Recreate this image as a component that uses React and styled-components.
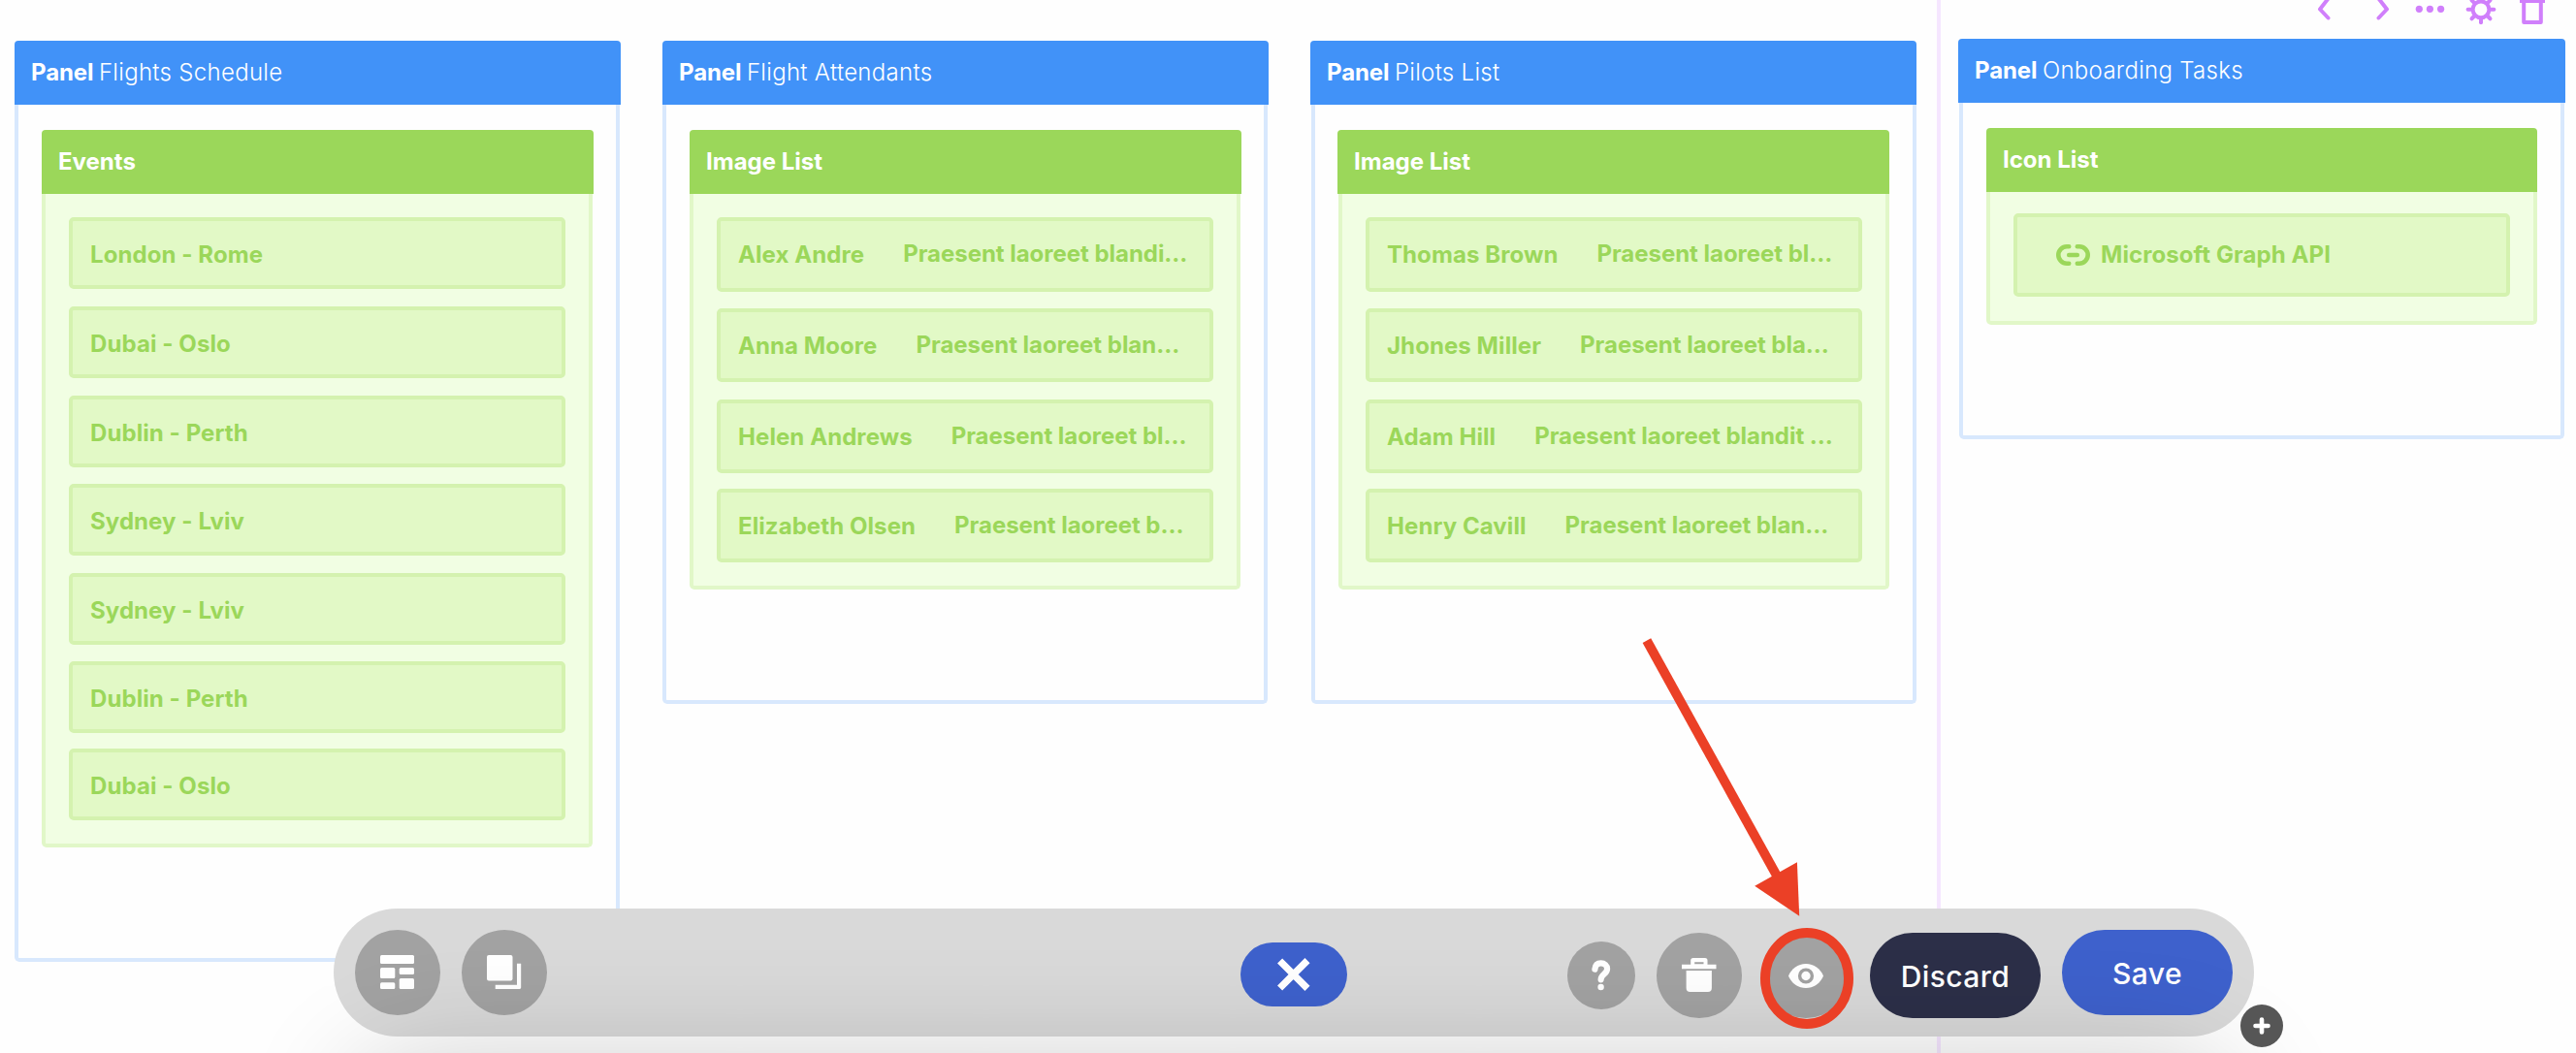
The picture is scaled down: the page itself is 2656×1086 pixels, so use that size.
import React from 'react'
import styled, { createGlobalStyle } from 'styled-components';


const GlobalStyle = createGlobalStyle`
  * {
    box-sizing: border-box;
  }

  body {
    margin: 0;
    background: #fefefe;
    font-family: Inter, "Liberation Sans", sans-serif;
    overflow: hidden;
  }
`

const Events = [
  { name: "London - Rome", gap: 18 },
  { name: "Dubai - Oslo", gap: 18 },
  { name: "Dublin - Perth", gap: 17 },
  { name: "Sydney - Lviv", gap: 18 },
  { name: "Sydney - Lviv", gap: 17 },
  { name: "Dublin - Perth", gap: 16 },
  { name: "Dubai - Oslo", gap: 0 },
]

const Attendants = [
  { name: "Alex Andre", text: "Praesent laoreet blandi…", gap: 17, height: 77 },
  { name: "Anna Moore", text: "Praesent laoreet blan…", gap: 18, height: 76 },
  { name: "Helen Andrews", text: "Praesent laoreet bl…", gap: 16, height: 76 },
  { name: "Elizabeth Olsen", text: "Praesent laoreet b…", gap: 0, height: 76 },
]

const Pilots = [
  { name: "Thomas Brown", text: "Praesent laoreet bl…", gap: 17, height: 77 },
  { name: "Jhones Miller", text: "Praesent laoreet bla…", gap: 18, height: 76 },
  { name: "Adam Hill", text: "Praesent laoreet blandit …", gap: 16, height: 76 },
  { name: "Henry Cavill", text: "Praesent laoreet blan…", gap: 0, height: 76 },
]


const Page = styled.main`
  position: relative;
  display: flex;
  width: 2656px;
  height: 1086px;
  overflow: hidden;
`

const MainColumn = styled.section`
  width: 1997px;
  padding: 42px 21px 0 15px;
  display: flex;
  align-items: flex-start;
  gap: 43px;
`

const SideColumn = styled.section`
  flex: 1;
  display: flex;
  flex-direction: column;
  border-left: 4px solid #f5e6ff;
  padding: 0 11px 0 18px;
`

//column actions
const Actions = styled.div`
  height: 40px;
  display: flex;
  justify-content: flex-end;
  padding-right: 19px;
  color: #d07ffb;

  svg {
    display: block;
  }
`

//panels
const PanelBox = styled.article`
  flex: ${(props) => props.$grow ? '1' : 'none'};
`

const PanelHeader = styled.header`
  height: 66px;
  padding: 18px 17px 0;
  background: #4192f8;
  border-radius: 4px 4px 0 0;
  color: white;
  font-size: 24px;
  font-weight: 350;
  line-height: 30px;
  letter-spacing: 0.3px;
  white-space: nowrap;

  b {
    font-weight: 700;
    letter-spacing: -0.1px;
    margin-right: 5.5px;
  }
`

const PanelBody = styled.div`
  margin: 0 1px;
  padding: 26px 24px 114px;
  border: 4px solid #d8e8fd;
  border-top: 0;
  border-radius: 0 0 5px 5px;

  ${(props) => props.$edge === 'left' && `
    margin: 0 1px 0 0;
    padding-right: 23px;
  `}

  ${(props) => props.$edge === 'right' && `
    margin: 0 0 0 1px;
    padding-left: 23px;
  `}
`

const ListHeader = styled.header`
  height: 66px;
  padding: 18px 17px 0;
  background: #9bd75a;
  border-radius: 4px 4px 0 0;
  color: white;
  font-size: 24px;
  font-weight: 700;
  line-height: 30px;
`

const ListBody = styled.ul`
  list-style: none;
  margin: 0 ${(props) => props.$edge === 'left' ? 1 : 0}px 0 ${(props) => props.$edge === 'right' ? 1 : 0}px;
  padding: ${(props) => props.$icons ? '22px 24px 25px' : '24px'};
  background: #f1fee3;
  border: 4px solid #e1f7c8;
  border-top: 0;
  border-radius: 0 0 5px 5px;
`

const Row = styled.li`
  display: flex;
  align-items: flex-start;
  height: ${(props) => props.$height || 74}px;
  margin-bottom: ${(props) => props.$gap || 0}px;
  padding: 20px 18px 0;
  background: #e2f9c6;
  border: 4px solid #d4f2af;
  border-radius: 5px;
  color: #9bd75a;
  font-size: 24px;
  font-weight: 700;
  line-height: 30px;
  letter-spacing: 0.08px;
  white-space: nowrap;
`

const IconRow = styled(Row)`
  height: 86px;
  padding: 24px 40px 0;

  svg {
    margin: 4px 11px 0 0;
  }
`

const Description = styled.span`
  margin: -1px 0 0 40px;
  letter-spacing: -0.03px;
`

//bottom toolbar
const Toolbar = styled.nav`
  position: absolute;
  left: 344px;
  bottom: 17px;
  width: 1980px;
  height: 132px;
  padding: 0 22px;
  border-radius: 66px;
  background: #d9d9d9;
  display: grid;
  grid-template-columns: 1fr auto 1fr;
  align-items: center;
`

const Group = styled.div`
  display: flex;
  align-items: center;
  gap: 22px;
  justify-content: ${(props) => props.$end ? 'flex-end' : 'flex-start'};
`

const RoundButton = styled.button`
  width: ${(props) => props.$size || 88}px;
  height: ${(props) => props.$size || 88}px;
  margin: ${(props) => props.$drop || 0}px 0 0;
  padding: 0;
  border: 0;
  border-radius: 50%;
  background: #a2a2a2;
  color: white;
  display: flex;
  align-items: center;
  justify-content: center;
`

const CloseButton = styled.button`
  width: 110px;
  height: 66px;
  margin: 4px 0 0;
  padding: 0;
  border: 0;
  border-radius: 33px;
  background: #3e61cc;
  display: flex;
  align-items: center;
  justify-content: center;
`

const TextButton = styled.button`
  width: 176px;
  height: 88px;
  margin: ${(props) => props.$drop || 0}px 0 0;
  padding: 1px 0 0;
  border: 0;
  border-radius: 44px;
  background: ${(props) => props.$dark ? '#2c2f48' : '#3e61cc'};
  color: white;
  font-family: inherit;
  font-size: 30px;
  font-weight: 450;
  letter-spacing: 0.4px;
`

const AddButton = styled.button`
  position: absolute;
  left: 2310px;
  top: 1036px;
  width: 44px;
  height: 44px;
  padding: 0;
  border: 0;
  border-radius: 50%;
  background: #565656;
  display: flex;
  align-items: center;
  justify-content: center;
`

const BottomShade = styled.div`
  position: absolute;
  left: 370px;
  right: 358px;
  top: 1106px;
  height: 120px;
  border-radius: 60px;
  box-shadow: 0 0 120px 10px rgba(0, 0, 0, 0.2);
  pointer-events: none;
`

const Pointer = styled.svg`
  position: absolute;
  left: 1680px;
  top: 640px;
  pointer-events: none;
`


const ActionIcons = () => (
  <svg width="240" height="30" viewBox="2386 0 240 30" fill="none" stroke="currentColor">
    <path d="M2400.5 -1.5 L2392 9.5 L2400.5 18.5" strokeWidth="4" strokeLinejoin="round" strokeLinecap="round" />
    <path d="M2452.5 -1.5 L2461 9.5 L2452.5 18.5" strokeWidth="4" strokeLinejoin="round" strokeLinecap="round" />
    <g fill="currentColor" stroke="none">
      <circle cx="2494.3" cy="9.3" r="3.6" />
      <circle cx="2505.4" cy="9.3" r="3.6" />
      <circle cx="2516.6" cy="9.3" r="3.6" />
    </g>
    <g transform="translate(2558 9.8)" strokeWidth="4" strokeLinecap="round">
      <circle r="8.4" />
      {[0, 45, 90, 135, 180, 225, 270, 315].map( angle => (
        <path key={ angle } d="M0 9.5 V13.4" transform={ `rotate(${angle})` } />
      ))}
    </g>
    <path d="M2602.2 0 V23 H2619.8 V0" strokeWidth="4" strokeLinejoin="round" />
    <path d="M2598 1 H2624" strokeWidth="4" />
  </svg>
)

const LinkIcon = () => (
  <svg width="35" height="22" viewBox="0 0 35 22" fill="none" stroke="currentColor" strokeWidth="4.6" strokeLinecap="round">
    <path d="M13.2 2.3 H11 A8.7 8.7 0 0 0 11 19.7 H13.2" />
    <path d="M21.8 2.3 H24 A8.7 8.7 0 0 1 24 19.7 H21.8" />
    <path d="M13.2 11 H21.8" />
  </svg>
)

const LayoutIcon = () => (
  <svg width="36" height="36" viewBox="0 0 36 36" fill="currentColor">
    <rect width="35" height="9" rx="1.5" />
    <rect y="13" width="15.3" height="11" rx="1.5" />
    <rect x="19.7" y="13" width="15.3" height="7" rx="1.5" />
    <rect y="28.3" width="15.3" height="6.7" rx="1.5" />
    <rect x="19.7" y="24" width="15.3" height="11" rx="1.5" />
  </svg>
)

const CopyIcon = () => (
  <svg width="36" height="36" viewBox="0 0 36 36" fill="currentColor">
    <rect width="26.5" height="26.5" rx="2" />
    <path d="M31 8.7 H35.2 V33.6 Q35.2 35 33.8 35 H8.7 V30.8 H31 Z" />
  </svg>
)

const CloseIcon = () => (
  <svg width="34" height="34" viewBox="0 0 34 34" stroke="white" strokeWidth="7.2">
    <path d="M2.6 3 L31 31.4 M31 2.6 L2.6 31" />
  </svg>
)

const HelpIcon = () => (
  <svg width="20" height="32" viewBox="0 0 20 32" fill="none" stroke="currentColor" strokeWidth="6.2" strokeLinecap="round">
    <path d="M3.4 9.6 C3.8 5.6 6 3.4 9.6 3.4 C13.4 3.4 16.1 5.7 16.1 9.2 C16.1 14.6 9.6 14.6 9.6 20.3" />
    <circle cx="9.6" cy="28" r="3.2" fill="currentColor" stroke="none" />
  </svg>
)

const TrashIcon = () => (
  <svg width="36" height="36" viewBox="0 0 36 36" fill="currentColor">
    <path fillRule="evenodd" d="M9.2 6.7 V2.5 Q9.2 0 11.7 0 H24 Q26.5 0 26.5 2.5 V6.7 H35.5 V11.2 H0 V6.7 Z M13.2 4.2 V6.2 H22.5 V4.2 Z" />
    <path d="M4.6 13 H30.9 V31 Q30.9 35 26.9 35 H8.6 Q4.6 35 4.6 31 Z" />
  </svg>
)

const EyeIcon = () => (
  <svg width="36" height="25" viewBox="0 0 36 25">
    <path d="M0 12.5 C3 5 9.8 0 18 0 C26.2 0 33 5 36 12.5 C33 20 26.2 25 18 25 C9.8 25 3 20 0 12.5 Z" fill="white" />
    <circle cx="18" cy="12.5" r="6.4" fill="white" stroke="#a2a2a2" strokeWidth="3.4" />
  </svg>
)

const PlusIcon = () => (
  <svg width="18" height="18" viewBox="0 0 18 18" stroke="white" strokeWidth="4.6" strokeLinecap="round">
    <path d="M9 2.5 V15.5 M2.5 9 H15.5" />
  </svg>
)


const Panel = ({ title, list, grow, icons, edge, children }) => (
  <PanelBox $grow={ grow }>
    <PanelHeader><b>Panel</b>{ title }</PanelHeader>
    <PanelBody $edge={ edge }>
      <ListHeader>{ list }</ListHeader>
      <ListBody $icons={ icons } $edge={ edge }>{ children }</ListBody>
    </PanelBody>
  </PanelBox>
)

const ImageRows = ({ items }) => items.map( item => (
  <Row key={ item.name } $gap={ item.gap } $height={ item.height }>
    <span>{ item.name }</span>
    <Description>{ item.text }</Description>
  </Row>
))


const App = () => {
  return (
    <>
      <GlobalStyle />
      <Page>
        <MainColumn>
          <Panel title="Flights Schedule" list="Events" edge="left" grow>
            { Events.map( (event, index) => (
              <Row key={ index } $gap={ event.gap }>{ event.name }</Row>
            ))}
          </Panel>
          <Panel title="Flight Attendants" list="Image List" edge="left" grow>
            <ImageRows items={ Attendants } />
          </Panel>
          <Panel title="Pilots List" list="Image List" edge="right" grow>
            <ImageRows items={ Pilots } />
          </Panel>
        </MainColumn>

        <SideColumn>
          <Actions>
            <ActionIcons />
          </Actions>
          <Panel title="Onboarding Tasks" list="Icon List" icons>
            <IconRow>
              <LinkIcon />
              Microsoft Graph API
            </IconRow>
          </Panel>
        </SideColumn>

        <Toolbar>
          <Group>
            <RoundButton><LayoutIcon /></RoundButton>
            <RoundButton><CopyIcon /></RoundButton>
          </Group>
          <CloseButton><CloseIcon /></CloseButton>
          <Group $end>
            <RoundButton $size={ 70 } $drop={ 6 }><HelpIcon /></RoundButton>
            <RoundButton $drop={ 6 }><TrashIcon /></RoundButton>
            <RoundButton $drop={ 6 }><EyeIcon /></RoundButton>
            <TextButton $dark $drop={ 6 }>Discard</TextButton>
            <TextButton>Save</TextButton>
          </Group>
        </Toolbar>
        <BottomShade />
        <AddButton><PlusIcon /></AddButton>

        <Pointer width="240" height="430" viewBox="1680 640 240 430">
          <path d="M1697.9 660.7 L1833 905" stroke="#eb4026" strokeWidth="9.8" />
          <path d="M1809.2 913.7 L1852.9 889.3 L1855.2 944.7 Z" fill="#eb4026" />
          <ellipse cx="1863" cy="1009" rx="43" ry="47" fill="none" stroke="#eb4026" strokeWidth="10" />
        </Pointer>
      </Page>
    </>
  )
}

export default App
